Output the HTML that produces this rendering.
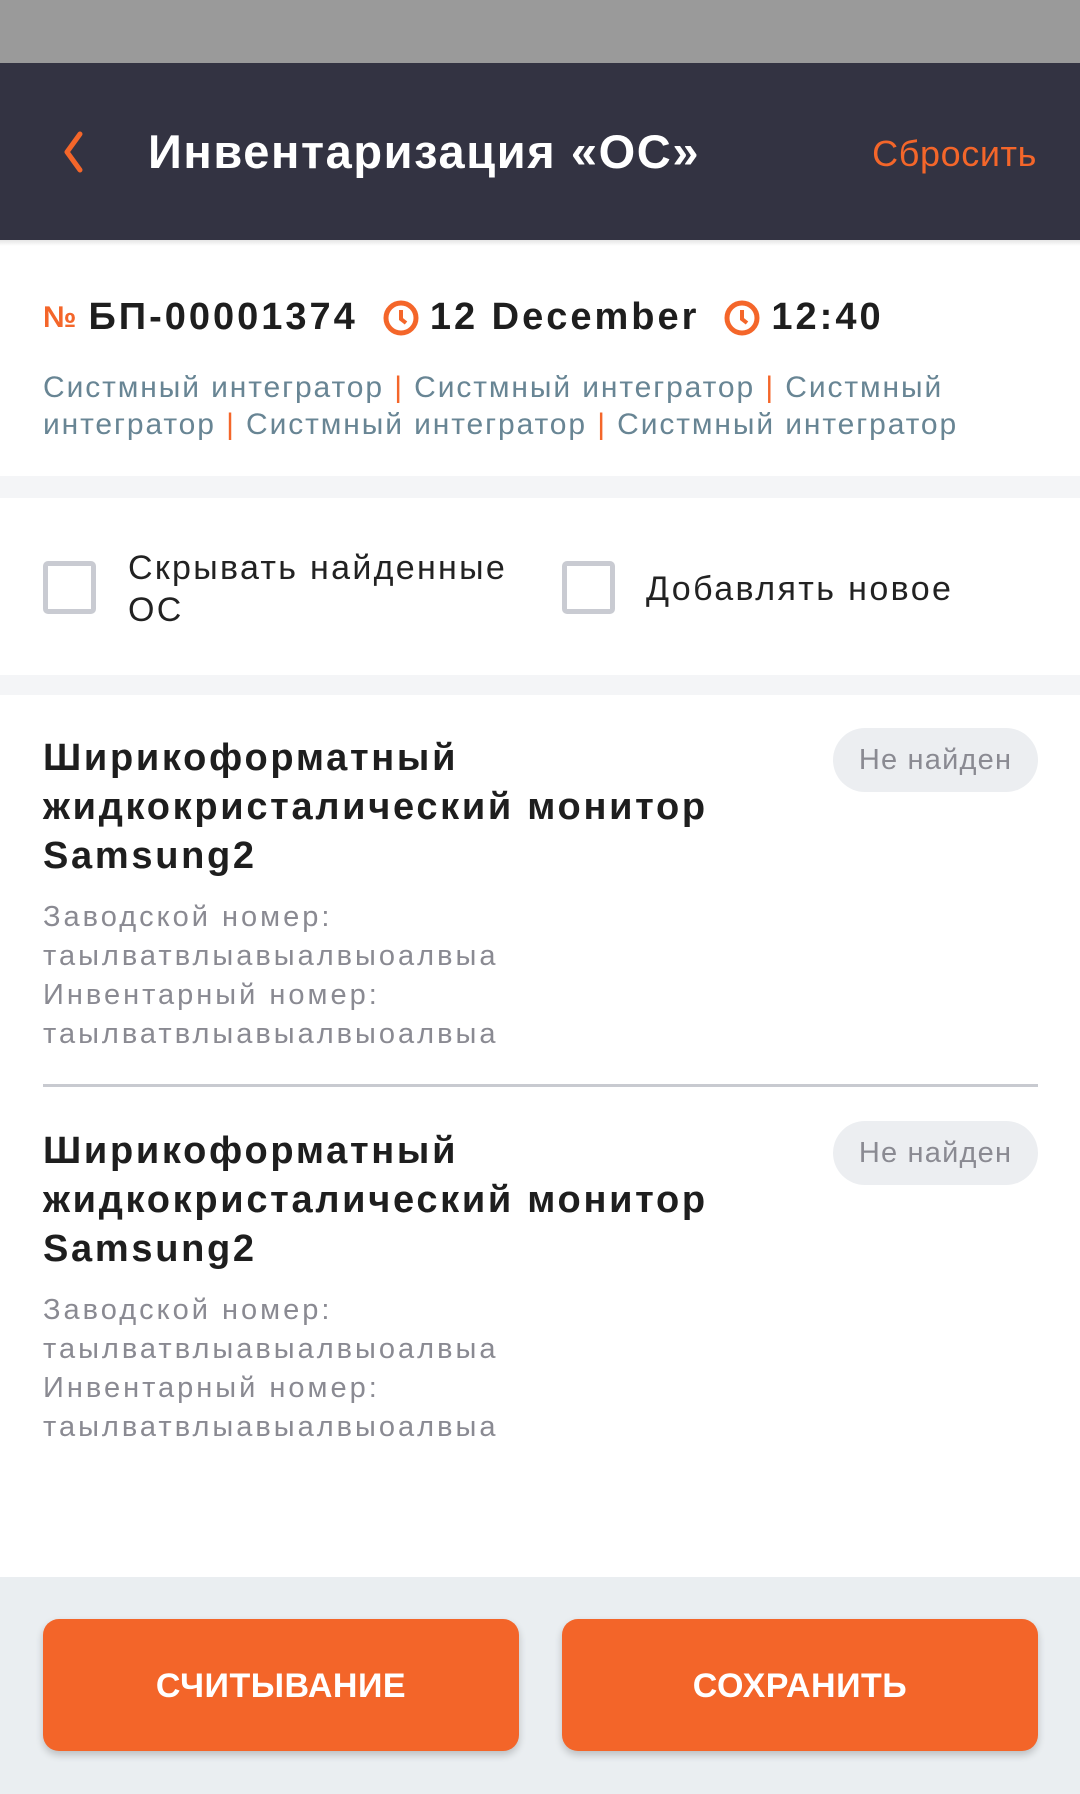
<!DOCTYPE html>
<html><head><meta charset="utf-8"><style>
*{margin:0;padding:0;box-sizing:border-box}
body{width:1080px;height:1794px;background:#fff;font-family:"Liberation Sans","Noto Sans CJK SC",sans-serif;position:relative;overflow:hidden}
.a{position:absolute;white-space:nowrap}
</style></head><body>
<div class="a" style="left:0;top:0;width:1080px;height:63px;background:#9a9a9a"></div>
<div class="a" style="left:0;top:63px;width:1080px;height:177px;background:#333342"></div>
<svg class="a" style="left:58px;top:130px" width="30" height="44" viewBox="0 0 30 44"><path d="M22 4 L9 22 L22 40" stroke="#f4662a" stroke-width="5" fill="none" stroke-linecap="round" stroke-linejoin="round"/></svg>
<div class="a" style="left:148px;top:124px;font-size:47px;font-weight:bold;color:#fff;letter-spacing:1.6px">Инвентаризация «ОС»</div>
<div class="a" style="right:43px;top:133px;font-size:36px;color:#f4662a;letter-spacing:0.6px">Сбросить</div>
<div class="a" style="left:0;top:240px;width:1080px;height:6px;background:linear-gradient(#e6e6e6,#fff)"></div>

<div class="a" style="left:43px;top:296px;font-size:38px;color:#1e1e1e;font-weight:bold;letter-spacing:3px;display:flex;align-items:center">
<span style="color:#f4662a;font-size:30px;margin-right:12px;letter-spacing:0">№</span>БП-00001374
<svg style="margin:0 10px 0 24px" width="38" height="38" viewBox="0 0 38 38"><circle cx="19" cy="19" r="15" stroke="#f4662a" stroke-width="5" fill="none"/><path d="M19 11 V20 L24 24" stroke="#f4662a" stroke-width="4" fill="none"/></svg>12 December
<svg style="margin:0 10px 0 24px" width="38" height="38" viewBox="0 0 38 38"><circle cx="19" cy="19" r="15" stroke="#f4662a" stroke-width="5" fill="none"/><path d="M19 11 V20 L24 24" stroke="#f4662a" stroke-width="4" fill="none"/></svg>12:40</div>
<div class="a" style="left:43px;top:369px;font-size:30px;line-height:37px;color:#688594;letter-spacing:1.9px">Систмный интегратор <span style="color:#f4662a">|</span> Систмный интегратор <span style="color:#f4662a">|</span> Систмный<br>интегратор <span style="color:#f4662a">|</span> Систмный интегратор <span style="color:#f4662a">|</span> Систмный интегратор</div>

<div class="a" style="left:0;top:476px;width:1080px;height:22px;background:#f4f5f7"></div>
<div class="a" style="left:43px;top:561px;width:53px;height:53px;border:5px solid #c9cbd2;border-radius:5px"></div>
<div class="a" style="left:128px;top:547px;font-size:34px;line-height:42px;color:#222;letter-spacing:2.3px">Скрывать найденные<br>ОС</div>
<div class="a" style="left:562px;top:561px;width:53px;height:53px;border:5px solid #c9cbd2;border-radius:5px"></div>
<div class="a" style="left:646px;top:568px;font-size:34px;line-height:42px;color:#222;letter-spacing:2.4px">Добавлять новое</div>
<div class="a" style="left:0;top:675px;width:1080px;height:20px;background:#f4f5f7"></div>

<div class="a" style="left:43px;top:734px;font-size:38px;line-height:49px;font-weight:bold;color:#1e1e1e;letter-spacing:2.7px">Ширикоформатный<br>жидкокристалический монитор<br>Samsung2</div>
<div class="a" style="left:833px;top:728px;width:205px;height:64px;border-radius:32px;background:#eceef1;color:#8a8a92;font-size:29px;line-height:64px;text-align:center;letter-spacing:1.2px">Не найден</div>
<div class="a" style="left:43px;top:898px;font-size:29px;line-height:39px;color:#8a8a92;letter-spacing:3px">Заводской номер:<br>таылватвлыавыалвыоалвыа<br>Инвентарный номер:<br>таылватвлыавыалвыоалвыа</div>
<div class="a" style="left:43px;top:1084px;width:995px;height:3px;background:#c8cad0"></div>

<div class="a" style="left:43px;top:1127px;font-size:38px;line-height:49px;font-weight:bold;color:#1e1e1e;letter-spacing:2.7px">Ширикоформатный<br>жидкокристалический монитор<br>Samsung2</div>
<div class="a" style="left:833px;top:1121px;width:205px;height:64px;border-radius:32px;background:#eceef1;color:#8a8a92;font-size:29px;line-height:64px;text-align:center;letter-spacing:1.2px">Не найден</div>
<div class="a" style="left:43px;top:1291px;font-size:29px;line-height:39px;color:#8a8a92;letter-spacing:3px">Заводской номер:<br>таылватвлыавыалвыоалвыа<br>Инвентарный номер:<br>таылватвлыавыалвыоалвыа</div>

<div class="a" style="left:0;top:1577px;width:1080px;height:217px;background:#eaeef1"></div>
<div class="a" style="left:43px;top:1619px;width:476px;height:132px;border-radius:16px;background:#f36529;box-shadow:0 4px 8px rgba(0,0,0,0.2);color:#fff;font-size:34px;font-weight:bold;line-height:134px;text-align:center;letter-spacing:0.5px">СЧИТЫВАНИЕ</div>
<div class="a" style="left:562px;top:1619px;width:476px;height:132px;border-radius:16px;background:#f36529;box-shadow:0 4px 8px rgba(0,0,0,0.2);color:#fff;font-size:34px;font-weight:bold;line-height:134px;text-align:center;letter-spacing:0.5px">СОХРАНИТЬ</div>
</body></html>
